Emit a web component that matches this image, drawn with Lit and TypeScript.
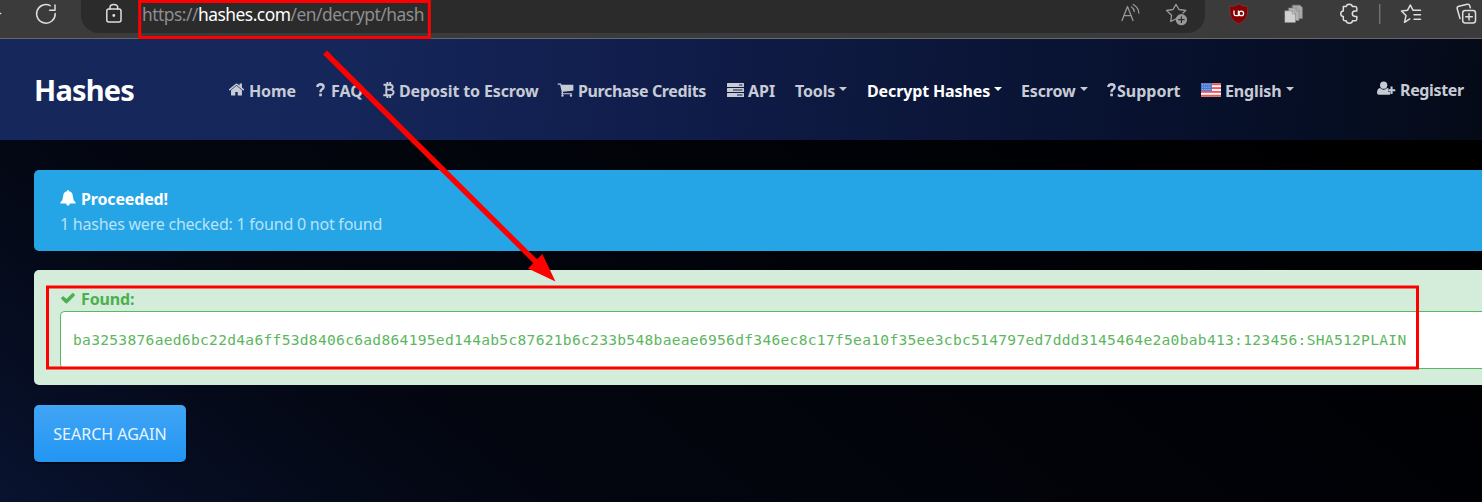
import { LitElement, html, css, svg } from "lit";
import { customElement } from "lit/decorators.js";

const HASH =
  "ba3253876aed6bc22d4a6ff53d8406c6ad864195ed144ab5c87621b6c233b548baeae6956df346ec8c17f5ea10f35ee3cbc514797ed7ddd3145464e2a0bab413:123456:SHA512PLAIN";

const fa = (d: string) => html`<svg class="fa" viewBox="0 0 1792 1792"><path d=${d} /></svg>`;

const homeIcon = fa(
  "M1472 992v480q0 26-19 45t-45 19h-384v-384h-256v384h-384q-26 0-45-19t-19-45v-480q0-1 .5-3t.5-3l575-474 575 474q1 2 1 6zm223-69l-62 74q-8 9-21 11h-3q-13 0-21-7l-692-577-692 577q-12 8-24 7-13-2-21-11l-62-74q-8-10-7-23.5t11-21.5l719-599q32-26 76-26t76 26l244 204v-195q0-14 9-23t23-9h192q14 0 23 9t9 23v408l219 182q10 8 11 21.5t-7 23.5z"
);
const cartIcon = fa(
  "M704 1536q0 52-38 90t-90 38-90-38-38-90 38-90 90-38 90 38 38 90zm896 0q0 52-38 90t-90 38-90-38-38-90 38-90 90-38 90 38 38 90zm128-1088v512q0 24-16.5 42.5t-40.5 21.5l-1044 122q13 60 13 70 0 16-24 64h920q26 0 45 19t19 45-19 45-45 19h-1024q-26 0-45-19t-19-45q0-11 8-31.5t16-36 21.5-40 15.5-29.5l-177-823h-204q-26 0-45-19t-19-45 19-45 45-19h256q16 0 28.5 6.5t19.5 15.5 13 24.5 8 26 5.5 29.5 4.5 26h1201q26 0 45 19t19 45z"
);
const checkIcon = fa(
  "M1671 566q0 40-28 68l-724 724-136 136q-28 28-68 28t-68-28l-136-136-362-362q-28-28-28-68t28-68l136-136q28-28 68-28t68 28l294 295 656-657q28-28 68-28t68 28l136 136q28 28 28 68z"
);
const bitcoinIcon = html`<svg class="btc" viewBox="0 0 12 16">
  <path d="M.5 2.7H6.3Q10 2.8 9.7 5.2 9.5 7.1 7 7.6M3.2 7.6H6.8Q10.8 7.9 10.6 10.5 10.3 13.2 6.5 13.2H.3M3.3 2.7V13.2M4.4 0V2.7M7.2 0V2.9M4.4 13V16M7.2 13V16" />
</svg>`;
const serverIcon = html`<svg class="server" viewBox="0 0 17 14">
  <rect width="17" height="4" rx=".6" /><rect y="5" width="17" height="4" rx=".6" /><rect y="10" width="17" height="4" rx=".6" />
  <path d="M12 2h3.5M6 7h9.5M10 12h5.5" />
</svg>`;
const flagIcon = html`<svg class="flag" viewBox="0 0 21 14">
  <rect width="21" height="14" fill="#fff" />
  ${[0, 4, 8, 12].map((y) => svg`<rect y=${y} width="21" height="2" fill="#f0585b" />`)}
  <rect width="11.5" height="8" fill="#4277d5" />
  ${[1.5, 4, 6.5].map((y) => svg`<path d=${`M1 ${y}H11`} stroke="#dce8ff" stroke-width=".8" stroke-dasharray=".9 1.1" />`)}
</svg>`;
const registerIcon = html`<svg class="user" viewBox="0 0 20 15">
  <circle cx="7" cy="4" r="3.8" />
  <path d="M3.2 7Q5 8.7 7 8.7T10.8 7Q12 7.2 12.4 8H11.6V11H13.8V14.2H2Q0 14.1 0 12 0 7.6 3.2 7z" />
  <path d="M14.2 5.5H16.4V8.2H19.2V10.5H16.4V13.2H14.2V10.5H11.8V8.2H14.2z" />
</svg>`;
const bellIcon = html`<svg class="bell" viewBox="0 0 16 16">
  <path d="M8 0Q9 0 9 1.2 12.6 2 12.8 6 13 10.5 15.6 12.6V13.6H9.9Q9.7 15.7 8 15.7T6.1 13.6H.4V12.6Q3 10.5 3.2 6 3.4 2 7 1.2 7 0 8 0z" />
</svg>`;
const questionIcon = html`<svg class="question" viewBox="0 0 9 14">
  <path d="M1.2 4Q1.8 1.3 4.5 1.3 7.6 1.5 7.6 4 7.6 5.5 5.8 6.5 4.5 7.3 4.5 9.3" />
  <rect x="3.2" y="10.6" width="2.7" height="2.7" rx=".4" />
</svg>`;

@customElement("browser-bar")
export class BrowserBar extends LitElement {
  static styles = css`
    :host { display: block; height: 38px; overflow: hidden; background: #3b3b3b; border-bottom: 1px solid #686868; }
    .row { display: flex; height: 33px; }
    .lead { width: 81px; flex: none; }
    .lead svg, .tools svg { display: block; }
    .pill { display: flex; width: 1124px; flex: none; background: #2b2b2b; border-radius: 0 0 18px 18px; }
    .lock { width: 61px; flex: none; }
    .url { flex: 1; font: 17.4px/28px "Noto Sans", sans-serif; letter-spacing: -0.5px; color: #8f8f8f; white-space: nowrap; }
    .host { color: #fff; }
    .acts { width: 115px; flex: none; }
    .tools { width: 277px; flex: none; }
    svg { fill: none; stroke: #dedede; stroke-width: 1.5; stroke-linecap: round; stroke-linejoin: round; }
    .acts svg { stroke: #989898; stroke-width: 1.3; }
  `;
  render() {
    return html`<div class="row">
      <div class="lead">
        <svg width="81" height="33" viewBox="0 0 81 33">
          <path d="M-1 13.5H.7" />
          <path d="M50.2 5.6A9.3 9.3 0 1 0 55.2 13.5M55 5V10.3H49.6" />
        </svg>
      </div>
      <div class="pill">
        <div class="lock">
          <svg width="61" height="33" viewBox="0 0 61 33">
            <rect x="25.8" y="9" width="14.2" height="13" rx="2" />
            <path d="M29 9V7.5Q29 4.5 32.8 4.5T36.7 7.5V9" />
            <circle cx="32.8" cy="15.5" r=".7" fill="#dedede" />
          </svg>
        </div>
        <div class="url">https://<span class="host">hashes.com</span>/en/decrypt/hash</div>
        <div class="acts">
          <svg width="115" height="33" viewBox="1090 0 115 33">
            <path d="M1122 20.5 1127.5 6.5 1133 20.5M1124 15.7H1131M1131.5 7Q1134 8.5 1134.2 11.5M1133.2 4.5Q1138.6 7.5 1138.8 13" />
            <path d="M1176 18.8 1170.7 21.5 1171.6 15.2 1166.5 10.5 1173 9.5 1176 4.4 1179 9.5 1185.8 10.5 1183 13" />
            <circle cx="1181.4" cy="19.7" r="5" fill="#999" />
            <path d="M1178.7 19.7H1184.1M1181.4 17V22.4" stroke="#2b2b2b" />
          </svg>
        </div>
      </div>
      <div class="tools">
        <svg width="277" height="33" viewBox="1205 0 277 33">
          <path d="M1238.7 4Q1242 6.5 1247.7 6.5 1248 14 1246.2 17.5 1244 21.5 1238.7 24 1233.4 21.5 1231.2 17.5 1229.5 14 1229.7 6.5 1235.5 6.5 1238.7 4z" fill="#850003" stroke="#6d3d3e" stroke-width=".8" />
          <path d="M1234 11V14Q1234.2 15.7 1235.8 15.7T1238.4 15.7V11" stroke="#fff" stroke-width="1.3" />
          <circle cx="1241.3" cy="13.4" r="2.3" stroke="#fff" stroke-width="1.3" />
          <g stroke="#858585" stroke-width=".6">
            <path d="M1292.5 5.2H1300L1302.3 7.5V18.5H1292.5z" fill="#aaa" />
            <path d="M1288.8 8H1296.5L1299 10.3V20.5H1288.8z" fill="#b3b3b3" />
            <path d="M1285 10.8H1292.5L1295.5 13.5V22.5H1285z" fill="#d0d0d0" />
            <path d="M1292.3 11V14H1295.5M1296 8.3V11H1299" />
          </g>
          <path d="M1343.3 6.5H1346.2Q1346.4 4.2 1349.3 4.2T1352.3 6.5H1355.3Q1356.8 6.7 1356.8 8.2V11.1H1355Q1352.3 11.4 1352.3 13.8T1355 16.5H1356.8V19.2Q1356.7 20.8 1355.2 20.8H1352.5Q1352.2 23.2 1349.4 23.2T1346.2 20.8H1345Q1343.3 20.8 1343.3 19.2V16.5Q1340.8 16.4 1340.8 13.8T1343.3 11.1z" />
          <path d="M1379.7 4.5V23.5" stroke="#707070" />
          <path d="M1409.8 18.8 1404.5 22.3 1406 15.6 1401.5 11 1407.5 10.3 1410.3 5 1413.1 10.3H1420.5M1414 14.7H1420.5M1414 19.3H1420.5" />
          <rect x="1462.7" y="10.5" width="12.8" height="12.5" rx="2.4" />
          <path d="M1469 13.5V20.1M1465.8 16.8H1472.3M1460 18.5 1457.2 8.8Q1456.8 6.8 1458.8 6.3L1467.4 4.3Q1469.2 4 1469.8 6L1470.3 7.8" />
        </svg>
      </div>
    </div>`;
  }
}

@customElement("site-header")
export class SiteHeader extends LitElement {
  static styles = css`
    :host {
      display: flex; align-items: center; height: 101px; box-sizing: border-box; padding-left: 34px; color: #c7cbd6;
      background: linear-gradient(94deg, #16275b 0%, #15265a 23%, #111e4d 42%, #0d183e 58%, #081230 76%, #060e23 90%, #050a17 100%);
      font: bold 16px/24px "Noto Sans", sans-serif; white-space: nowrap;
    }
    .brand { width: 195px; flex: none; color: #fff; font-size: 29px; line-height: 40px; letter-spacing: -0.8px; }
    .nav { display: grid; flex: none; grid-template-columns: 87px 67px 175px 169px 68px 72px 154px 86px 94px 176px 105px; padding-top: 2px; }
    .item { display: flex; align-items: center; }
    .label { display: block; }
    .active { color: #fff; }
    .tight { letter-spacing: -0.13px; }
    .tighter { letter-spacing: -0.36px; }
    .icon { display: flex; flex: none; align-items: center; height: 24px; padding-bottom: 2px; box-sizing: border-box; }
    .i-home, .i-cart { width: 20px; }
    .i-q { width: 15px; }
    .i-btc { width: 16px; }
    .i-srv { width: 21px; }
    .i-flag { width: 24px; }
    .i-user { width: 23px; }
    .i-sup { width: 10px; }
    .reg { padding-bottom: 2px; }
    svg { fill: currentColor; display: block; flex: none; }
    .fa { width: 17px; height: 17px; margin-left: -1px; }
    .btc { width: 12px; height: 16px; fill: none; stroke: currentColor; stroke-width: 1.9; }
    .question { width: 9px; height: 14px; }
    .question path { fill: none; stroke: currentColor; stroke-width: 2.4; }
    .server { width: 17px; height: 14px; }
    .server path { stroke: #101c45; stroke-width: 1; }
    .flag { width: 20px; height: 14px; }
    .user { width: 19px; height: 15px; }
    .caret { margin: -4px 0 0 4px; border: 4px solid transparent; border-top-color: currentColor; border-bottom: 0; }
  `;
  render() {
    const caret = html`<span class="caret"></span>`;
    return html`
      <div class="brand">Hashes</div>
      <div class="nav">
        <div class="item"><span class="icon i-home">${homeIcon}</span><span class="label tight">Home</span></div>
        <div class="item"><span class="icon i-q">${questionIcon}</span><span class="label">FAQ</span></div>
        <div class="item"><span class="icon i-btc">${bitcoinIcon}</span><span class="label tight">Deposit to Escrow</span></div>
        <div class="item"><span class="icon i-cart">${cartIcon}</span><span class="label tighter">Purchase Credits</span></div>
        <div class="item"><span class="icon i-srv">${serverIcon}</span><span class="label">API</span></div>
        <div class="item"><span class="label tight">Tools</span>${caret}</div>
        <div class="item active"><span class="label tight">Decrypt Hashes</span>${caret}</div>
        <div class="item"><span class="label tight">Escrow</span>${caret}</div>
        <div class="item"><span class="icon i-sup">${questionIcon}</span><span class="label">Support</span></div>
        <div class="item"><span class="icon i-flag">${flagIcon}</span><span class="label tight">English</span>${caret}</div>
        <div class="item reg"><span class="icon i-user">${registerIcon}</span><span class="label tighter">Register</span></div>
      </div>`;
  }
}

@customElement("app-root")
export class AppRoot extends LitElement {
  static styles = css`
    :host {
      display: block; position: relative; width: 1482px; height: 502px; overflow: hidden;
      background: linear-gradient(38deg, #08132f 0%, #070f26 7%, #050a1a 16%, #03060f 28%, #02040b 45%, #010207 62%, #000 90%);
      font: 16px/25px "Noto Sans", sans-serif;
    }
    .main { padding: 29.5px 0 0 34px; }
    .alert { box-sizing: border-box; border-radius: 5px 0 0 5px; padding-left: 26px; }
    .info { height: 81px; padding-top: 17.5px; background: #25a5e6; color: #b9e2f8; }
    .found { height: 115px; margin-top: 19.7px; padding-top: 17px; background: #d4edda; color: #4caf50; }
    .title { display: flex; align-items: center; height: 25px; font-weight: bold; letter-spacing: -0.15px; }
    .info .title { color: #fff; }
    .title svg { fill: currentColor; flex: none; width: 16px; height: 16px; margin: 0 5px 3px 0; }
    .msg { letter-spacing: -0.23px; }
    .result {
      box-sizing: border-box; height: 58px; margin-top: -1px; padding-left: 12px; overflow: hidden; white-space: nowrap;
      background: #fff; border: 1px solid #5cb860; border-right: 0; border-radius: 5px 0 0 5px;
      font: 14.6px/56px "DejaVu Sans Mono", monospace; letter-spacing: 0.285px; color: #5cb660;
    }
    .again {
      display: block; width: 152px; height: 57px; margin-top: 19.8px; padding: 2px 0 0; border: 0; border-radius: 5px;
      background: linear-gradient(#42a5f5, #2196f3); color: #e8f5ff; font: 16px/24px "Noto Sans", sans-serif; letter-spacing: 0;
      box-shadow: 0 1px 2px #000;
    }
    .marks { position: absolute; left: 0; top: 0; width: 1482px; height: 502px; fill: none; stroke: #f00; stroke-width: 3; }
  `;
  render() {
    return html`
      <browser-bar></browser-bar>
      <site-header></site-header>
      <div class="main">
        <div class="alert info">
          <div class="title">${bellIcon}<span>Proceeded!</span></div>
          <div class="msg">1 hashes were checked: 1 found 0 not found</div>
        </div>
        <div class="alert found">
          <div class="title">${checkIcon}<span>Found:</span></div>
          <div class="result">${HASH}</div>
        </div>
        <button class="again">SEARCH AGAIN</button>
      </div>
      <svg class="marks" viewBox="0 0 1482 502">
        <rect x="139.7" y="1.5" width="289.6" height="36" />
        <rect x="47.5" y="287" width="1370" height="81" />
        <path d="M325 52.5 538 264" stroke-width="5.4" />
        <path d="M555.5 281.5 542.3 254 528 268.5z" fill="#f00" stroke="none" />
      </svg>`;
  }
}
